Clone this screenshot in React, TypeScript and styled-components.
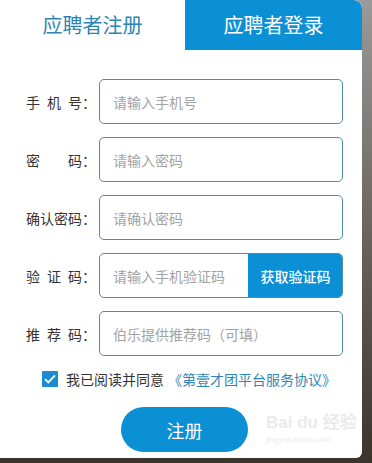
import React, { useState } from 'react'
import styled, { createGlobalStyle } from 'styled-components'

const GlobalStyle = createGlobalStyle`
  html, body {
    margin: 0;
    padding: 0;
  }
  body {
    width: 372px;
    height: 463px;
    overflow: hidden;
    background: linear-gradient(180deg, #9a9a9a 0%, #6f6963 45%, #3b342d 100%);
    font-family: "Noto Sans CJK SC", "Noto Sans", sans-serif;
  }
`

const Card = styled.div`
  position: relative;
  width: 362px;
  height: 458px;
  background: #fff;
  border-radius: 0 8px 6px 0;
  overflow: hidden;
  display: flex;
  flex-direction: column;
`

const Tabs = styled.div`
  display: grid;
  grid-template-columns: 185px 1fr;
  height: 50px;
`

const Tab = styled.div<{ $active?: boolean }>`
  display: flex;
  align-items: center;
  justify-content: center;
  font-size: 20px;
  padding-bottom: 2px;
  background: ${({ $active }) => ($active ? '#fff' : '#0b8fd5')};
  color: ${({ $active }) => ($active ? '#2c86b3' : '#fff')};
  border-top-right-radius: ${({ $active }) => ($active ? '0' : '8px')};
  cursor: pointer;
`

const Form = styled.div`
  display: flex;
  flex-direction: column;
  gap: 13px;
  padding: 29px 0 0 26px;
`

const Row = styled.div`
  display: flex;
  align-items: center;
  height: 45px;
`

const Label = styled.div`
  display: flex;
  align-items: center;
  width: 73px;
  font-size: 14px;
  color: #333;
`

const LabelText = styled.span`
  width: 56px;
  text-align: justify;
  text-align-last: justify;
`

const Field = styled.div`
  display: flex;
  width: 244px;
  height: 45px;
  box-sizing: border-box;
  border: 1px solid #4f8f9c;
  border-radius: 5px;
  overflow: hidden;
`

const Input = styled.input`
  flex: 1;
  min-width: 0;
  border: none;
  outline: none;
  padding: 0 0 0 13px;
  font-family: inherit;
  font-size: 14px;
  color: #333;
  background: transparent;
  &::placeholder {
    color: #a3a3a3;
  }
`

const CodeButton = styled.button`
  width: 95px;
  margin: -1px -1px -1px 0;
  border: none;
  background: #0b8fd5;
  color: #fff;
  font-family: inherit;
  font-size: 14px;
  font-weight: 500;
  cursor: pointer;
`

const Agree = styled.label`
  display: flex;
  align-items: center;
  margin: 13px 0 0 42px;
  font-size: 14px;
  color: #333;
  cursor: pointer;
`

const Check = styled.span`
  display: flex;
  align-items: center;
  justify-content: center;
  width: 16px;
  height: 16px;
  margin-right: 8px;
  background: #1a8bd0;
  border-radius: 1px;
`

const Link = styled.a`
  margin-left: 4px;
  color: #2f87b9;
  text-decoration: none;
`

const Submit = styled.button`
  align-self: flex-start;
  margin: 18px 0 0 121px;
  width: 127px;
  height: 45px;
  border: none;
  border-radius: 23px;
  background: #0b8fd5;
  color: #fff;
  font-family: inherit;
  font-size: 18px;
  cursor: pointer;
`

const Watermark = styled.div`
  position: absolute;
  left: 266px;
  top: 414px;
  color: #ebebeb;
  line-height: 1;
  white-space: nowrap;
  pointer-events: none;
  font-family: "Liberation Sans", "Noto Sans CJK SC", sans-serif;
`

const MarkTitle = styled.div`
  font-size: 17px;
  font-weight: bold;
`

const MarkUrl = styled.div`
  margin-top: 5px;
  font-size: 8px;
`

const fields = [
  { label: '手机号', placeholder: '请输入手机号' },
  { label: '密码', placeholder: '请输入密码', type: 'password' },
  { label: '确认密码', placeholder: '请确认密码', type: 'password' },
  { label: '验证码', placeholder: '请输入手机验证码', code: true },
  { label: '推荐码', placeholder: '伯乐提供推荐码（可填）' },
]

const App = () => {
  const [agreed, setAgreed] = useState(true)

  return (
    <>
      <GlobalStyle />
      <Card>
        <Tabs>
          <Tab $active>应聘者注册</Tab>
          <Tab>应聘者登录</Tab>
        </Tabs>
        <Form>
          {fields.map((f) => (
            <Row key={f.label}>
              <Label>
                <LabelText>{f.label}</LabelText>
                <span>：</span>
              </Label>
              <Field>
                <Input type={f.type || 'text'} placeholder={f.placeholder} />
                {f.code && <CodeButton>获取验证码</CodeButton>}
              </Field>
            </Row>
          ))}
        </Form>
        <Agree onClick={() => setAgreed(!agreed)}>
          <Check>
            {agreed && (
              <svg width="12" height="10" viewBox="0 0 12 10">
                <path d="M1 5.2 L4.3 8.4 L11 1.4" fill="none" stroke="#fff" strokeWidth="1.8" />
              </svg>
            )}
          </Check>
          我已阅读并同意
          <Link href="#" onClick={(e) => e.preventDefault()}>《第壹才团平台服务协议》</Link>
        </Agree>
        <Submit>注册</Submit>
        <Watermark>
          <MarkTitle>Bai du 经验</MarkTitle>
          <MarkUrl>jingyan.baidu.com</MarkUrl>
        </Watermark>
      </Card>
    </>
  )
}

export default App
